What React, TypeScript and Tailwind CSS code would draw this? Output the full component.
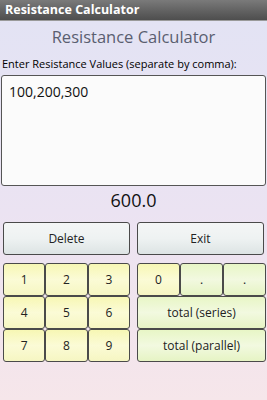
import React from 'react';

const font = { fontFamily: '"Open Sans", "Noto Sans", sans-serif' };

function Key({ label, tone, className = '' }: { label: string; tone: 'gray' | 'yellow' | 'green'; className?: string }) {
  const bg =
    tone === 'gray'
      ? 'bg-gradient-to-b from-[#f4f6f6] via-[#eef2f2] to-[#dde4e4]'
      : tone === 'yellow'
      ? 'bg-gradient-to-b from-[#f7f7b4] via-[#fbfbd6] to-[#f6f6c2]'
      : 'bg-gradient-to-b from-[#e8f6c6] via-[#f2f9e0] to-[#e6f4c4]';
  return (
    <div
      className={`flex items-center justify-center border border-[#4a4a4a] rounded-[3px] text-[12px] text-[#222] ${bg} ${className}`}
    >
      {label}
    </div>
  );
}

export default function App() {
  return (
    <div className="w-[267px] h-[400px] flex flex-col overflow-hidden" style={font}>
      {/* title bar */}
      <div className="h-[21px] bg-gradient-to-b from-[#7a7a7a] to-[#4e4e4e] border-b border-[#9a9a9a] flex items-center pl-[5px]">
        <span className="text-white font-bold text-[12.5px] leading-none">Resistance Calculator</span>
      </div>

      <div className="flex-1 flex flex-col bg-gradient-to-b from-[#e3e3f4] via-[#ebe3f2] to-[#f6e6ea]">
        <div className="text-center text-[16.5px] leading-[24px] text-[#5a5e70] mt-[4px]">Resistance Calculator</div>
        <div className="text-[11px] leading-[14px] text-black pl-[2px] mt-[8px]">
          Enter Resistance Values (separate by comma):
        </div>
        <div className="mx-[1px] mt-[4px] h-[111px] bg-[#fbfbfb] border border-[#555] rounded-[3px] pl-[7px] pt-[5px] text-[14px] text-[#111]">
          100,200,300
        </div>
        <div className="text-center text-[18px] leading-[24px] text-[#111] mt-[2px]">600.0</div>

        <div className="flex gap-[7px] px-[3px] mt-[10px] h-[33px]">
          <Key label="Delete" tone="gray" className="flex-1" />
          <Key label="Exit" tone="gray" className="flex-1" />
        </div>

        <div className="flex gap-[7px] pl-[3px] pr-[1px] mt-[8px]">
          <div className="w-[127px] grid grid-cols-3 grid-rows-[33px_33px_33px]">
            {['1', '2', '3', '4', '5', '6', '7', '8', '9'].map((n) => (
              <Key key={n} label={n} tone="yellow" />
            ))}
          </div>
          <div className="flex-1 grid grid-cols-3 grid-rows-[33px_33px_33px]">
            <Key label="0" tone="yellow" />
            <Key label="." tone="green" />
            <Key label="." tone="green" />
            <Key label="total (series)" tone="green" className="col-span-3" />
            <Key label="total (parallel)" tone="green" className="col-span-3" />
          </div>
        </div>
      </div>
    </div>
  );
}
